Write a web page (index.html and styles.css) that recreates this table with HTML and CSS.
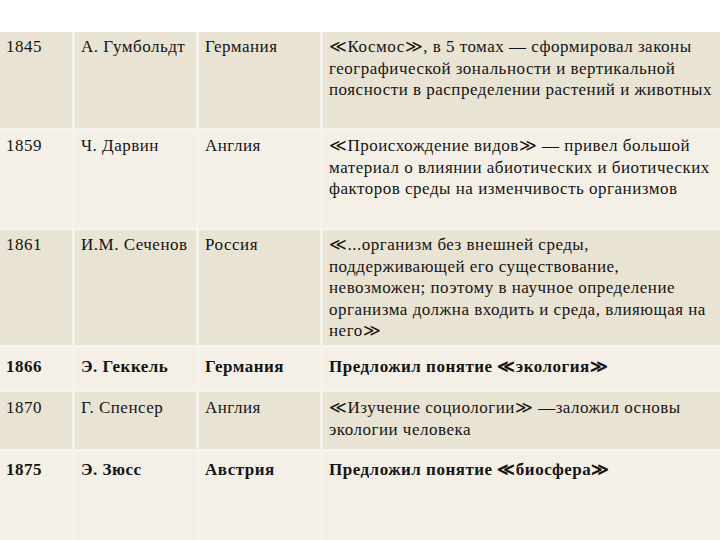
FILE: index.html
```html
<!DOCTYPE html>
<html lang="ru">
<head>
<meta charset="utf-8">
<link rel="stylesheet" href="styles.css">
</head>
<body>
<div class="table">
  <div class="row odd r1">
    <div class="cell">1845</div>
    <div class="cell">А. Гумбольдт</div>
    <div class="cell">Германия</div>
    <div class="cell">≪Космос≫, в 5 томах — сформировал законы географической зональности и вертикальной поясности в распределении растений и животных</div>
  </div>
  <div class="row even r2">
    <div class="cell">1859</div>
    <div class="cell">Ч. Дарвин</div>
    <div class="cell">Англия</div>
    <div class="cell">≪Происхождение видов≫ — привел большой материал о влиянии абиотических и биотических факторов среды на изменчивость организмов</div>
  </div>
  <div class="row odd r3">
    <div class="cell">1861</div>
    <div class="cell">И.М. Сеченов</div>
    <div class="cell">Россия</div>
    <div class="cell">≪...организм без внешней среды, поддерживающей его существование, невозможен; поэтому в научное определение организма должна входить и среда, влияющая на него≫</div>
  </div>
  <div class="row even r4 bold">
    <div class="cell">1866</div>
    <div class="cell">Э. Геккель</div>
    <div class="cell">Германия</div>
    <div class="cell">Предложил понятие ≪экология≫</div>
  </div>
  <div class="row odd r5">
    <div class="cell">1870</div>
    <div class="cell">Г. Спенсер</div>
    <div class="cell">Англия</div>
    <div class="cell">≪Изучение социологии≫ —заложил основы экологии человека</div>
  </div>
  <div class="row even r6 bold">
    <div class="cell">1875</div>
    <div class="cell">Э. Зюсс</div>
    <div class="cell">Австрия</div>
    <div class="cell">Предложил понятие ≪биосфера≫</div>
  </div>
</div>
</body>
</html>
```
FILE: styles.css
```css
html, body {
  margin: 0;
  padding: 0;
  background: #ffffff;
}
body {
  width: 720px;
  height: 540px;
  overflow: hidden;
  font-family: "Liberation Serif", "Times New Roman", serif;
  font-size: 17px;
  letter-spacing: 0.5px;
  line-height: 21.5px;
  color: #141414;
}
.table {
  margin-top: 32px;
  display: flex;
  flex-direction: column;
  gap: 3px;
  background: #f6f3ec;
}
.row {
  display: grid;
  grid-template-columns: 72px 121px 121px 397px;
  column-gap: 3px;
}
.cell {
  padding: 4px 2px 0 6px;
}
.odd .cell { background: #e9e3d3; }
.even .cell { background: #f4f0e7; }
.r1 { height: 96px; }
.r2 { height: 96px; }
.r3 { height: 115px; }
.r4 { height: 41px; }
.r5 { height: 57px; }
.r6 { height: 100px; }
.bold { font-weight: bold; }
.r4 .cell { padding-top: 8px; }
.r5 .cell { padding-top: 5px; }
.r6 .cell { padding-top: 7px; }
```
